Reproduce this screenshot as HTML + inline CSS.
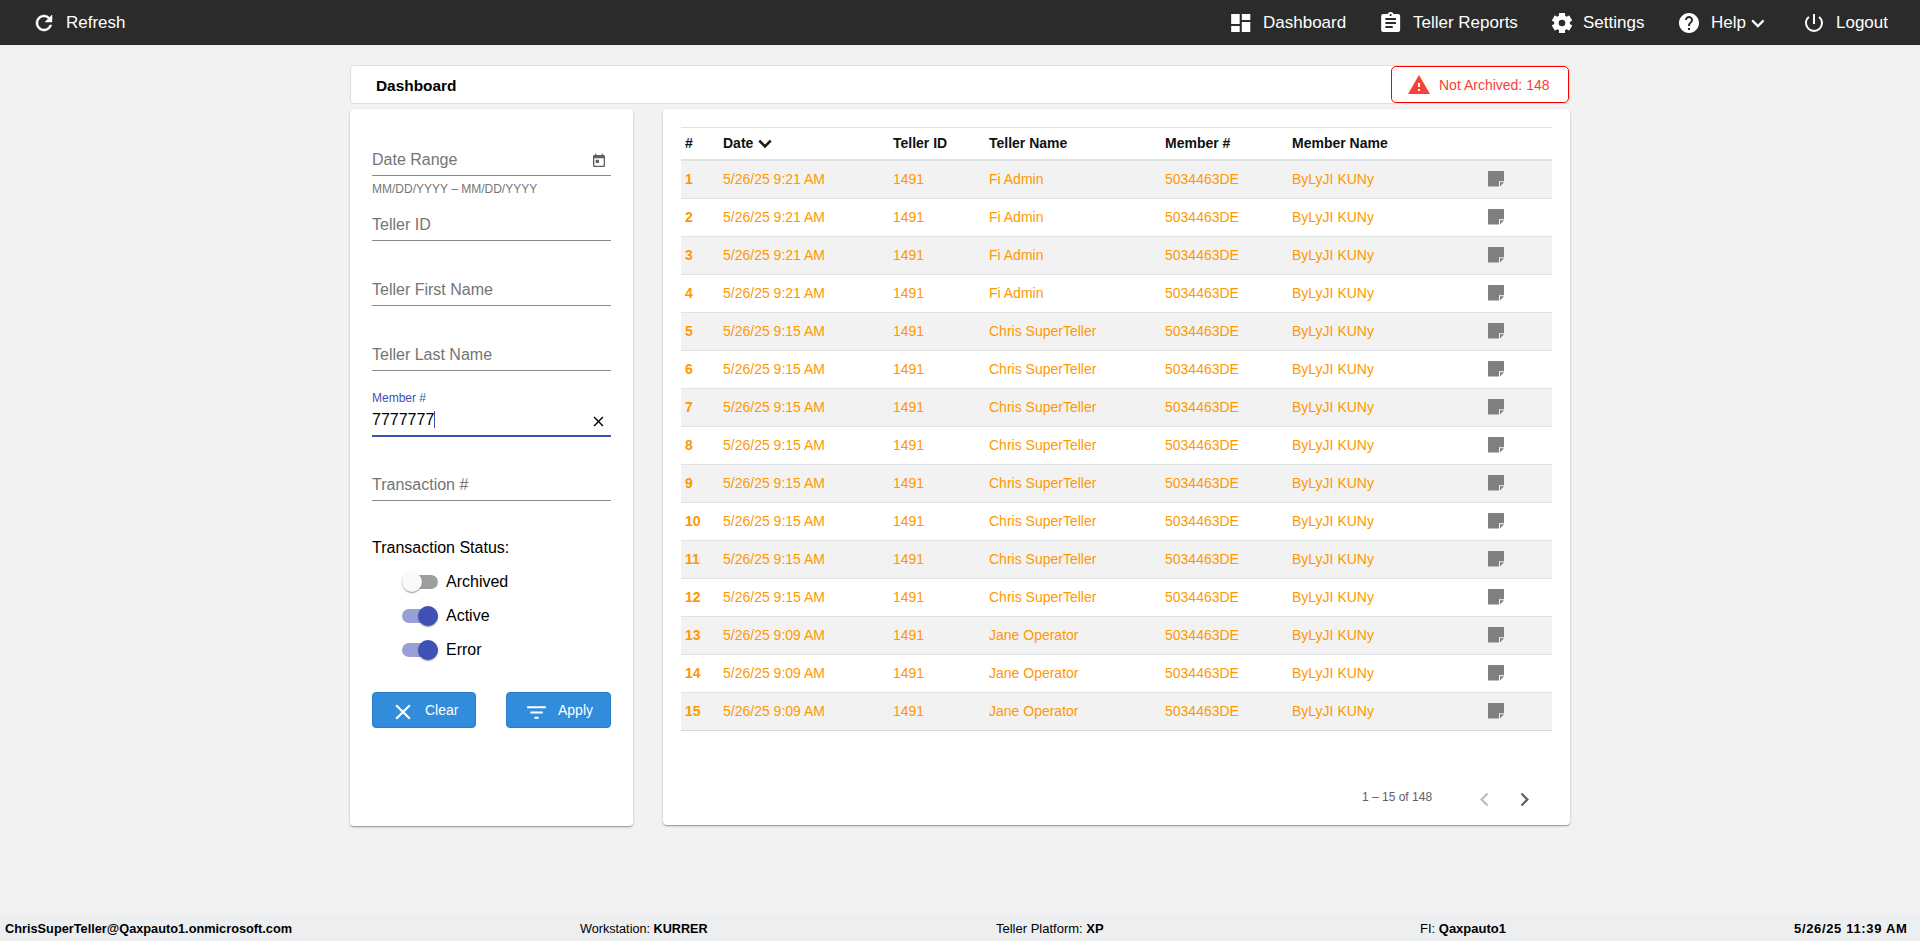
<!DOCTYPE html>
<html><head><meta charset="utf-8">
<style>
*{box-sizing:border-box;margin:0;padding:0}
html,body{width:1920px;height:941px;overflow:hidden}
body{background:#f2f2f2;font-family:"Liberation Sans",sans-serif;position:relative;color:#000}
.abs{position:absolute}
#hdr{position:absolute;left:0;top:0;width:1920px;height:45px;background:#2b2b2b;color:#fff;font-size:17px}
#hdr .it{position:absolute;top:0;height:45px;line-height:45px;white-space:nowrap}
#hdr svg{position:absolute;fill:#fff}
.card{position:absolute;background:#fff;border-radius:4px;box-shadow:0 1px 3px rgba(0,0,0,.2),0 1px 1px rgba(0,0,0,.14),0 2px 1px -1px rgba(0,0,0,.12)}
#title{left:350px;top:65px;width:1220px;height:39px;border:1px solid #dedede;box-shadow:none;border-radius:4px}
#title .t{position:absolute;left:25px;top:1px;line-height:37px;font-weight:bold;font-size:15.4px}
#badge{position:absolute;left:1391px;top:66px;width:178px;height:37px;border:1px solid #f00;border-radius:5px;background:#fff}
#badge .t{position:absolute;left:47px;top:1px;line-height:35px;font-size:14px;color:#f44336}
#filt{left:350px;top:109px;width:283px;height:717px}
#tbl{left:663px;top:109px;width:907px;height:716px}
.fld{position:absolute;left:22px;width:239px;border-bottom:1px solid #8a8a8a}
.ph{position:absolute;left:0;font-size:16px;color:#757575;white-space:nowrap}
.hint{position:absolute;font-size:12px;color:#757575;white-space:nowrap}
.lbl{position:absolute;font-size:16px;color:#000;white-space:nowrap}
.tog{position:absolute;left:52px;width:36px;height:20px}
.tog .tr{position:absolute;left:0;top:3px;width:36px;height:14px;border-radius:7px}
.tog .th{position:absolute;top:0;width:20px;height:20px;border-radius:50%;box-shadow:0 2px 1px -1px rgba(0,0,0,.2),0 1px 1px rgba(0,0,0,.14),0 1px 3px rgba(0,0,0,.12)}
.btn{position:absolute;top:583px;height:36px;background:#318cdb;color:#fff;border-radius:4px;font-size:14px;border:1px solid #2a7cc6}
.btn span{position:absolute;top:-1px;line-height:36px}
.btn svg{position:absolute;fill:#fff}
table{position:absolute;left:18px;top:18px;width:871px;border-collapse:collapse;font-size:14px}
th{font-weight:bold;text-align:left;height:32px;border-top:1px solid #dee2e6;border-bottom:2px solid #dee2e6;padding:0 0 0 4px;color:#111;white-space:nowrap}
td{height:38px;border-bottom:1px solid #dee2e6;padding:0 0 2px 4px;color:#ff9800;white-space:nowrap}
tr.o td{background:#f2f2f2}
tbody tr:first-child td{height:39px;padding-top:1px}
tbody tr:last-child td{border-bottom-color:#d6d6d6}
td.n{font-weight:bold}
.note{display:block;width:16px;height:16px;position:relative;top:0}
#foot{position:absolute;left:0;top:915px;width:1920px;height:26px;background:#edeef0;font-size:13px;color:#000}
#foot .f{position:absolute;top:.5px;line-height:26px;white-space:nowrap}
</style></head><body>
<div id="hdr">
  <svg class="abs" style="left:32px;top:11px" width="24" height="24" viewBox="0 0 24 24"><path stroke="#fff" stroke-width="0.5" d="M17.65 6.35A7.958 7.958 0 0 0 12 4c-4.42 0-7.99 3.58-7.99 8s3.57 8 7.99 8c3.73 0 6.84-2.55 7.73-6h-2.08A5.99 5.99 0 0 1 12 18c-3.31 0-6-2.69-6-6s2.69-6 6-6c1.66 0 3.14.69 4.22 1.78L13 11h7V4l-2.35 2.35z"/></svg>
  <div class="it" style="left:66px">Refresh</div>
  <svg style="left:1228.4px;top:11px" width="25.5" height="24" viewBox="0 0 24 24" preserveAspectRatio="none"><path d="M3 13h8V3H3v10zm0 8h8v-6H3v6zm10 0h8V11h-8v10zm0-18v6h8V3h-8z"/></svg>
  <div class="it" style="left:1263px">Dashboard</div>
  <svg style="left:1378px;top:11px" width="25.3" height="24" viewBox="0 0 24 24" preserveAspectRatio="none"><path d="M19 3h-4.18C14.4 1.84 13.3 1 12 1c-1.3 0-2.4.84-2.82 2H5c-1.1 0-2 .9-2 2v14c0 1.1.9 2 2 2h14c1.1 0 2-.9 2-2V5c0-1.1-.9-2-2-2zm-7 0c.55 0 1 .45 1 1s-.45 1-1 1-1-.45-1-1 .45-1 1-1zm2 14H7v-2h7v2zm3-4H7v-2h10v2zm0-4H7V7h10v2z"/></svg>
  <div class="it" style="left:1413px">Teller Reports</div>
  <svg style="left:1550px;top:10.9px" width="24" height="24" viewBox="-12 -12 24 24"><circle r="7.9"/><rect x="-3.05" y="-10.1" width="6.1" height="10.1" rx="0.4" transform="rotate(0)"/><rect x="-3.05" y="-10.1" width="6.1" height="10.1" rx="0.4" transform="rotate(60)"/><rect x="-3.05" y="-10.1" width="6.1" height="10.1" rx="0.4" transform="rotate(120)"/><rect x="-3.05" y="-10.1" width="6.1" height="10.1" rx="0.4" transform="rotate(180)"/><rect x="-3.05" y="-10.1" width="6.1" height="10.1" rx="0.4" transform="rotate(240)"/><rect x="-3.05" y="-10.1" width="6.1" height="10.1" rx="0.4" transform="rotate(300)"/><circle r="3.3" fill="#2b2b2b"/></svg>
  <div class="it" style="left:1583px">Settings</div>
  <svg style="left:1677px;top:11px" width="24" height="24" viewBox="0 0 24 24"><path d="M12 2C6.48 2 2 6.48 2 12s4.48 10 10 10 10-4.48 10-10S17.52 2 12 2zm1 17h-2v-2h2v2zm2.07-7.75l-.9.92C13.45 12.9 13 13.5 13 15h-2v-.5c0-1.1.45-2.1 1.17-2.83l1.24-1.26c.37-.36.59-.86.59-1.41 0-1.1-.9-2-2-2s-2 .9-2 2H8c0-2.21 1.79-4 4-4s4 1.79 4 4c0 .88-.36 1.68-.93 2.25z"/></svg>
  <div class="it" style="left:1711px">Help</div>
  <svg style="left:1751px;top:19px" width="14" height="10" viewBox="0 0 14 10"><path fill="none" stroke="#fff" stroke-width="2.2" d="M1.2 1.4 6.9 7.1 12.6 1.4"/></svg>
  <svg style="left:1802px;top:11px" width="24" height="24" viewBox="0 0 24 24"><path d="M13 3h-2v10h2V3zm4.83 2.17-1.42 1.42A6.92 6.92 0 0 1 19 12c0 3.87-3.13 7-7 7A6.995 6.995 0 0 1 7.58 6.58L6.17 5.17A8.932 8.932 0 0 0 3 12a9 9 0 0 0 18 0c0-2.74-1.23-5.18-3.17-6.83z"/></svg>
  <div class="it" style="left:1836px">Logout</div>
</div>

<div class="card" id="title"><div class="t">Dashboard</div></div>
<div id="badge">
  <svg class="abs" style="left:15px;top:6px" width="24" height="24" viewBox="0 0 24 24"><path fill="#f44336" d="M1 21h22L12 2 1 21zm12-3h-2v-2h2v2zm0-4h-2v-4h2v4z"/></svg>
  <div class="t">Not Archived: 148</div>
</div>

<div class="card" id="filt">
  <div class="fld" style="top:40px;height:27px"><div class="ph" style="top:2px">Date Range</div>
    <svg class="abs" style="left:219px;top:4px" width="16" height="16" viewBox="0 0 24 24"><path fill="#616161" d="M19 3h-1V1h-2v2H8V1H6v2H5c-1.11 0-1.99.9-1.99 2L3 19c0 1.1.89 2 2 2h14c1.1 0 2-.9 2-2V5c0-1.1-.9-2-2-2zm0 16H5V8h14v11zM7 10h5v5H7z"/></svg>
  </div>
  <div class="hint" style="left:22px;top:73px">MM/DD/YYYY – MM/DD/YYYY</div>
  <div class="fld" style="top:105px;height:27px"><div class="ph" style="top:2px">Teller ID</div></div>
  <div class="fld" style="top:170px;height:27px"><div class="ph" style="top:2px">Teller First Name</div></div>
  <div class="fld" style="top:235px;height:27px"><div class="ph" style="top:2px">Teller Last Name</div></div>
  <div class="abs" style="left:22px;top:281.5px;font-size:12px;color:#3f51b5">Member #</div>
  <div class="fld" style="top:295px;height:33px;border-bottom:2px solid #3f51b5"><div class="ph" style="top:7px;color:#000">7777777<span style="display:inline-block;width:1px;height:17px;background:#3f51b5;vertical-align:-3px"></span></div>
    <svg class="abs" style="left:218px;top:9px" width="17" height="17" viewBox="0 0 24 24"><path fill="#000" d="M19 6.41 17.59 5 12 10.59 6.41 5 5 6.41 10.59 12 5 17.59 6.41 19 12 13.41 17.59 19 19 17.59 13.41 12z"/></svg>
  </div>
  <div class="fld" style="top:365px;height:27px"><div class="ph" style="top:2px">Transaction #</div></div>
  <div class="lbl" style="left:22px;top:430px">Transaction Status:</div>
  <div class="tog" style="top:463px"><div class="tr" style="background:#9e9e9e"></div><div class="th" style="left:0;background:#fafafa"></div></div>
  <div class="lbl" style="left:96px;top:464px">Archived</div>
  <div class="tog" style="top:497px"><div class="tr" style="background:#98a0d7"></div><div class="th" style="left:16px;background:#3f51b5"></div></div>
  <div class="lbl" style="left:96px;top:498px">Active</div>
  <div class="tog" style="top:531px"><div class="tr" style="background:#98a0d7"></div><div class="th" style="left:16px;background:#3f51b5"></div></div>
  <div class="lbl" style="left:96px;top:532px">Error</div>
  <div class="btn" style="left:22px;width:104px">
    <svg style="left:16.6px;top:6.3px" width="26" height="26" viewBox="0 0 24 24"><path d="M19 6.41 17.59 5 12 10.59 6.41 5 5 6.41 10.59 12 5 17.59 6.41 19 12 13.41 17.59 19 19 17.59 13.41 12z"/></svg>
    <span style="left:52px">Clear</span></div>
  <div class="btn" style="left:156px;width:105px">
    <svg style="left:16.9px;top:7.2px" width="25" height="25" viewBox="0 0 24 24"><path d="M10 18h4v-2h-4v2zM3 6v2h18V6H3zm3 7h12v-2H6v2z"/></svg>
    <span style="left:51px">Apply</span></div>
</div>

<div class="card" id="tbl">
<table>
<colgroup><col style="width:38px"><col style="width:170px"><col style="width:96px"><col style="width:176px"><col style="width:127px"><col style="width:196px"><col></colgroup>
<thead><tr><th>#</th><th>Date <svg width="14" height="10" viewBox="0 0 14 10" style="vertical-align:-1px;margin-left:.5px"><path fill="none" stroke="#1a1a1a" stroke-width="2.6" d="M1.3 1.6 7 7.3 12.7 1.6"/></svg></th><th>Teller ID</th><th>Teller Name</th><th>Member #</th><th>Member Name</th><th></th></tr></thead>
<tbody>
<tr class="o"><td class="n">1</td><td>5/26/25 9:21 AM</td><td>1491</td><td>Fi Admin</td><td>5034463DE</td><td>ByLyJI KUNy</td><td><svg class="note" viewBox="0 0 16 16"><path fill="#808080" d="M0 0H16V10.3H11V15.6H0Z"/><path fill="#808080" d="M12 11.3H16L12 15.6Z"/></svg></td></tr>
<tr><td class="n">2</td><td>5/26/25 9:21 AM</td><td>1491</td><td>Fi Admin</td><td>5034463DE</td><td>ByLyJI KUNy</td><td><svg class="note" viewBox="0 0 16 16"><path fill="#808080" d="M0 0H16V10.3H11V15.6H0Z"/><path fill="#808080" d="M12 11.3H16L12 15.6Z"/></svg></td></tr>
<tr class="o"><td class="n">3</td><td>5/26/25 9:21 AM</td><td>1491</td><td>Fi Admin</td><td>5034463DE</td><td>ByLyJI KUNy</td><td><svg class="note" viewBox="0 0 16 16"><path fill="#808080" d="M0 0H16V10.3H11V15.6H0Z"/><path fill="#808080" d="M12 11.3H16L12 15.6Z"/></svg></td></tr>
<tr><td class="n">4</td><td>5/26/25 9:21 AM</td><td>1491</td><td>Fi Admin</td><td>5034463DE</td><td>ByLyJI KUNy</td><td><svg class="note" viewBox="0 0 16 16"><path fill="#808080" d="M0 0H16V10.3H11V15.6H0Z"/><path fill="#808080" d="M12 11.3H16L12 15.6Z"/></svg></td></tr>
<tr class="o"><td class="n">5</td><td>5/26/25 9:15 AM</td><td>1491</td><td>Chris SuperTeller</td><td>5034463DE</td><td>ByLyJI KUNy</td><td><svg class="note" viewBox="0 0 16 16"><path fill="#808080" d="M0 0H16V10.3H11V15.6H0Z"/><path fill="#808080" d="M12 11.3H16L12 15.6Z"/></svg></td></tr>
<tr><td class="n">6</td><td>5/26/25 9:15 AM</td><td>1491</td><td>Chris SuperTeller</td><td>5034463DE</td><td>ByLyJI KUNy</td><td><svg class="note" viewBox="0 0 16 16"><path fill="#808080" d="M0 0H16V10.3H11V15.6H0Z"/><path fill="#808080" d="M12 11.3H16L12 15.6Z"/></svg></td></tr>
<tr class="o"><td class="n">7</td><td>5/26/25 9:15 AM</td><td>1491</td><td>Chris SuperTeller</td><td>5034463DE</td><td>ByLyJI KUNy</td><td><svg class="note" viewBox="0 0 16 16"><path fill="#808080" d="M0 0H16V10.3H11V15.6H0Z"/><path fill="#808080" d="M12 11.3H16L12 15.6Z"/></svg></td></tr>
<tr><td class="n">8</td><td>5/26/25 9:15 AM</td><td>1491</td><td>Chris SuperTeller</td><td>5034463DE</td><td>ByLyJI KUNy</td><td><svg class="note" viewBox="0 0 16 16"><path fill="#808080" d="M0 0H16V10.3H11V15.6H0Z"/><path fill="#808080" d="M12 11.3H16L12 15.6Z"/></svg></td></tr>
<tr class="o"><td class="n">9</td><td>5/26/25 9:15 AM</td><td>1491</td><td>Chris SuperTeller</td><td>5034463DE</td><td>ByLyJI KUNy</td><td><svg class="note" viewBox="0 0 16 16"><path fill="#808080" d="M0 0H16V10.3H11V15.6H0Z"/><path fill="#808080" d="M12 11.3H16L12 15.6Z"/></svg></td></tr>
<tr><td class="n">10</td><td>5/26/25 9:15 AM</td><td>1491</td><td>Chris SuperTeller</td><td>5034463DE</td><td>ByLyJI KUNy</td><td><svg class="note" viewBox="0 0 16 16"><path fill="#808080" d="M0 0H16V10.3H11V15.6H0Z"/><path fill="#808080" d="M12 11.3H16L12 15.6Z"/></svg></td></tr>
<tr class="o"><td class="n">11</td><td>5/26/25 9:15 AM</td><td>1491</td><td>Chris SuperTeller</td><td>5034463DE</td><td>ByLyJI KUNy</td><td><svg class="note" viewBox="0 0 16 16"><path fill="#808080" d="M0 0H16V10.3H11V15.6H0Z"/><path fill="#808080" d="M12 11.3H16L12 15.6Z"/></svg></td></tr>
<tr><td class="n">12</td><td>5/26/25 9:15 AM</td><td>1491</td><td>Chris SuperTeller</td><td>5034463DE</td><td>ByLyJI KUNy</td><td><svg class="note" viewBox="0 0 16 16"><path fill="#808080" d="M0 0H16V10.3H11V15.6H0Z"/><path fill="#808080" d="M12 11.3H16L12 15.6Z"/></svg></td></tr>
<tr class="o"><td class="n">13</td><td>5/26/25 9:09 AM</td><td>1491</td><td>Jane Operator</td><td>5034463DE</td><td>ByLyJI KUNy</td><td><svg class="note" viewBox="0 0 16 16"><path fill="#808080" d="M0 0H16V10.3H11V15.6H0Z"/><path fill="#808080" d="M12 11.3H16L12 15.6Z"/></svg></td></tr>
<tr><td class="n">14</td><td>5/26/25 9:09 AM</td><td>1491</td><td>Jane Operator</td><td>5034463DE</td><td>ByLyJI KUNy</td><td><svg class="note" viewBox="0 0 16 16"><path fill="#808080" d="M0 0H16V10.3H11V15.6H0Z"/><path fill="#808080" d="M12 11.3H16L12 15.6Z"/></svg></td></tr>
<tr class="o"><td class="n">15</td><td>5/26/25 9:09 AM</td><td>1491</td><td>Jane Operator</td><td>5034463DE</td><td>ByLyJI KUNy</td><td><svg class="note" viewBox="0 0 16 16"><path fill="#808080" d="M0 0H16V10.3H11V15.6H0Z"/><path fill="#808080" d="M12 11.3H16L12 15.6Z"/></svg></td></tr>
</tbody>
</table>
<div class="abs" style="left:699px;top:681px;font-size:12px;color:#616161">1 – 15 of 148</div>
<svg class="abs" style="left:807.8px;top:676.5px" width="27" height="27" viewBox="0 0 24 24"><path fill="#bdbdbd" d="M15.41 7.41 14 6l-6 6 6 6 1.41-1.41L10.83 12z"/></svg>
<svg class="abs" style="left:847.6px;top:676.5px" width="27" height="27" viewBox="0 0 24 24"><path fill="#616161" d="M10 6 8.59 7.41 13.17 12l-4.58 4.59L10 18l6-6z"/></svg>
</div>

<div id="foot">
  <div class="f" style="left:5px;font-weight:bold;font-size:12.75px">ChrisSuperTeller@Qaxpauto1.onmicrosoft.com</div>
  <div class="f" style="left:580px;font-size:12.65px">Workstation: <b>KURRER</b></div>
  <div class="f" style="left:996px">Teller Platform: <b>XP</b></div>
  <div class="f" style="left:1420px">FI: <b>Qaxpauto1</b></div>
  <div class="f" style="left:1794px;font-weight:bold;letter-spacing:.66px">5/26/25 11:39 AM</div>
</div>
</body></html>
